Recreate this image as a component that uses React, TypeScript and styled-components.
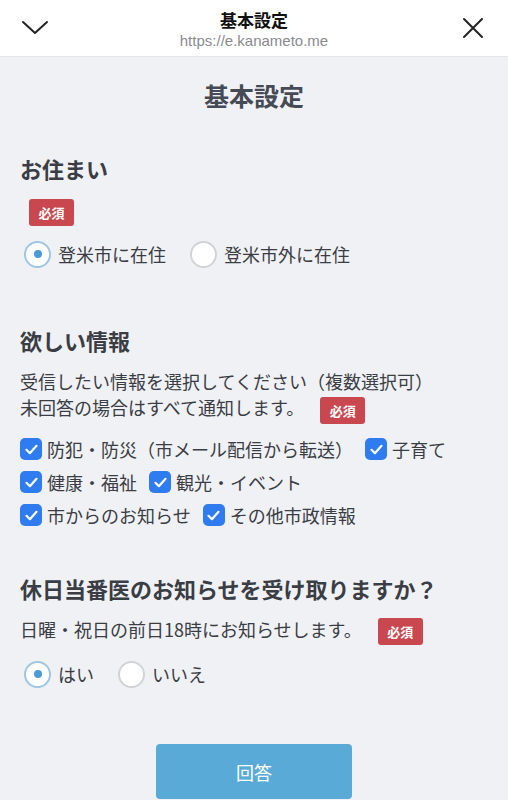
import React, { useState } from 'react';
import styled, { createGlobalStyle } from 'styled-components';

const GlobalStyle = createGlobalStyle`
  html, body {
    margin: 0;
    padding: 0;
    background: #f0f1f5;
  }
  body {
    font-family: "Noto Sans CJK JP", "Noto Sans", sans-serif;
    color: #3a3d44;
  }
`;

const ChevronIcon = () => (
  <svg width="28" height="16" viewBox="0 0 28 16" fill="none">
    <path d="M2 2l12 11L26 2" stroke="#222" strokeWidth="2" strokeLinecap="round" strokeLinejoin="round" />
  </svg>
);

const CloseIcon = () => (
  <svg width="22" height="22" viewBox="0 0 22 22" fill="none">
    <path d="M2 2l18 18M20 2L2 20" stroke="#222" strokeWidth="2" strokeLinecap="round" />
  </svg>
);

const CheckIcon = () => (
  <svg width="13" height="11" viewBox="0 0 13 11" fill="none">
    <path d="M1.5 5.8l3.4 3.4L11.5 1.8" stroke="#fff" strokeWidth="2.2" strokeLinecap="round" strokeLinejoin="round" />
  </svg>
);

type RadioProps = { label: string; checked: boolean; onSelect: () => void };

const Radio: React.FC<RadioProps> = ({ label, checked, onSelect }) => (
  <RadioLabel onClick={onSelect}>
    <RadioCircle $checked={checked} />
    {label}
  </RadioLabel>
);

type CheckProps = { label: string; checked: boolean; onToggle: () => void };

const Check: React.FC<CheckProps> = ({ label, checked, onToggle }) => (
  <CheckLabel onClick={onToggle}>
    <CheckBox $checked={checked}>{checked && <CheckIcon />}</CheckBox>
    {label}
  </CheckLabel>
);

const infoItems = [
  ['防犯・防災（市メール配信から転送）', '子育て'],
  ['健康・福祉', '観光・イベント'],
  ['市からのお知らせ', 'その他市政情報'],
];

const App: React.FC = () => {
  const [home, setHome] = useState(0);
  const [doctor, setDoctor] = useState(0);
  const [checks, setChecks] = useState<Record<string, boolean>>(
    Object.fromEntries(infoItems.flat().map((k) => [k, true]))
  );

  const toggle = (k: string) => setChecks((c) => ({ ...c, [k]: !c[k] }));

  return (
    <Page>
      <GlobalStyle />
      <Header>
        <HeaderIcon><ChevronIcon /></HeaderIcon>
        <HeaderTitle>
          <HeaderName>基本設定</HeaderName>
          <HeaderUrl>https://e.kanameto.me</HeaderUrl>
        </HeaderTitle>
        <HeaderIcon><CloseIcon /></HeaderIcon>
      </Header>

      <Main>
        <PageTitle>基本設定</PageTitle>

        <Section $gap={40}>
          <SectionTitle>お住まい</SectionTitle>
          <BadgeRow>
            <Badge>必須</Badge>
          </BadgeRow>
          <Options $pad={10}>
            <Radio label="登米市に在住" checked={home === 0} onSelect={() => setHome(0)} />
            <Radio label="登米市外に在住" checked={home === 1} onSelect={() => setHome(1)} />
          </Options>
        </Section>

        <Section $gap={53}>
          <SectionTitle>欲しい情報</SectionTitle>
          <Description>
            受信したい情報を選択してください（複数選択可）
            <br />
            未回答の場合はすべて通知します。
            <Badge $inline>必須</Badge>
          </Description>
          <CheckList>
            {infoItems.map((row) => (
              <CheckRow key={row[0]}>
                {row.map((k) => (
                  <Check key={k} label={k} checked={checks[k]} onToggle={() => toggle(k)} />
                ))}
              </CheckRow>
            ))}
          </CheckList>
        </Section>

        <Section $gap={41}>
          <SectionTitle>休日当番医のお知らせを受け取りますか？</SectionTitle>
          <Description>
            日曜・祝日の前日18時にお知らせします。
            <Badge $inline>必須</Badge>
          </Description>
          <Options $pad={11}>
            <Radio label="はい" checked={doctor === 0} onSelect={() => setDoctor(0)} />
            <Radio label="いいえ" checked={doctor === 1} onSelect={() => setDoctor(1)} />
          </Options>
        </Section>

        <SubmitWrap>
          <SubmitButton>回答</SubmitButton>
        </SubmitWrap>
      </Main>
    </Page>
  );
};

export default App;

const Page = styled.div`
  width: 508px;
  height: 800px;
  overflow: hidden;
  background: #f0f1f5;
`;

const Header = styled.header`
  height: 57px;
  display: flex;
  align-items: center;
  justify-content: space-between;
  padding: 0 21px;
  background: #fff;
  border-bottom: 1px solid #e6e6ea;
  box-sizing: border-box;
`;

const HeaderIcon = styled.div`
  width: 28px;
  display: flex;
  justify-content: center;
  align-items: center;
`;

const HeaderTitle = styled.div`
  display: flex;
  flex-direction: column;
  align-items: center;
  padding-top: 2px;
`;

const HeaderName = styled.div`
  font-size: 17px;
  font-weight: 700;
  color: #111;
  line-height: 22px;
`;

const HeaderUrl = styled.div`
  font-family: "Liberation Sans", Arial, sans-serif;
  font-size: 15px;
  color: #8a8a8e;
  line-height: 19px;
`;

const Main = styled.main`
  padding: 0 20px;
`;

const PageTitle = styled.h1`
  margin: 0;
  padding-top: 20px;
  text-align: center;
  font-size: 25px;
  font-weight: 700;
  line-height: 36px;
  color: #454a55;
`;

const Section = styled.section<{ $gap: number }>`
  margin-top: ${(p) => p.$gap}px;
`;

const SectionTitle = styled.h2`
  margin: 0;
  font-size: 22px;
  font-weight: 700;
  line-height: 30px;
  color: #3a3d44;
`;

const BadgeRow = styled.div`
  padding: 16px 0 0 9px;
  display: flex;
`;

const Badge = styled.span<{ $inline?: boolean }>`
  display: inline-flex;
  align-items: center;
  justify-content: center;
  width: 45px;
  height: 27px;
  border-radius: 3px;
  background: #c9474f;
  color: #fff;
  font-size: 13px;
  font-weight: 700;
  line-height: 1;
  margin-left: ${(p) => (p.$inline ? '16px' : '0')};
  vertical-align: middle;
`;

const Options = styled.div<{ $pad: number }>`
  display: flex;
  align-items: center;
  gap: 24px;
  padding: ${(p) => p.$pad}px 0 0 4px;
`;

const RadioLabel = styled.label`
  display: flex;
  align-items: center;
  gap: 7px;
  font-size: 18px;
  color: #3a3d44;
  height: 36px;
  cursor: pointer;
`;

const RadioCircle = styled.span<{ $checked: boolean }>`
  width: 23px;
  height: 23px;
  border-radius: 50%;
  background: #fff;
  border: 2px solid ${(p) => (p.$checked ? '#9cc6e3' : '#d2d3d6')};
  display: flex;
  align-items: center;
  justify-content: center;
  flex: none;

  &::after {
    content: '';
    width: 8px;
    height: 8px;
    border-radius: 50%;
    background: ${(p) => (p.$checked ? '#4a9ad8' : 'transparent')};
  }
`;

const Description = styled.p`
  margin: 13px 0 0;
  font-size: 18px;
  line-height: 26px;
  color: #3a3d44;
`;

const CheckList = styled.div`
  display: flex;
  flex-direction: column;
  padding-top: 9px;
`;

const CheckRow = styled.div`
  display: flex;
  align-items: center;
  flex-wrap: wrap;
  gap: 12px;
`;

const CheckLabel = styled.label`
  display: flex;
  align-items: center;
  gap: 5px;
  font-size: 18px;
  height: 33px;
  color: #3a3d44;
  cursor: pointer;
`;

const CheckBox = styled.span<{ $checked: boolean }>`
  width: 22px;
  height: 22px;
  border-radius: 5px;
  background: ${(p) => (p.$checked ? '#2f7bf0' : '#fff')};
  border: ${(p) => (p.$checked ? 'none' : '1px solid #bbb')};
  display: flex;
  align-items: center;
  justify-content: center;
  flex: none;
`;

const SubmitWrap = styled.div`
  display: flex;
  justify-content: center;
  padding-top: 52px;
`;

const SubmitButton = styled.button`
  width: 196px;
  height: 55px;
  border: none;
  border-radius: 4px;
  background: #5aaad7;
  color: #fff;
  font-family: inherit;
  font-size: 18px;
`;
